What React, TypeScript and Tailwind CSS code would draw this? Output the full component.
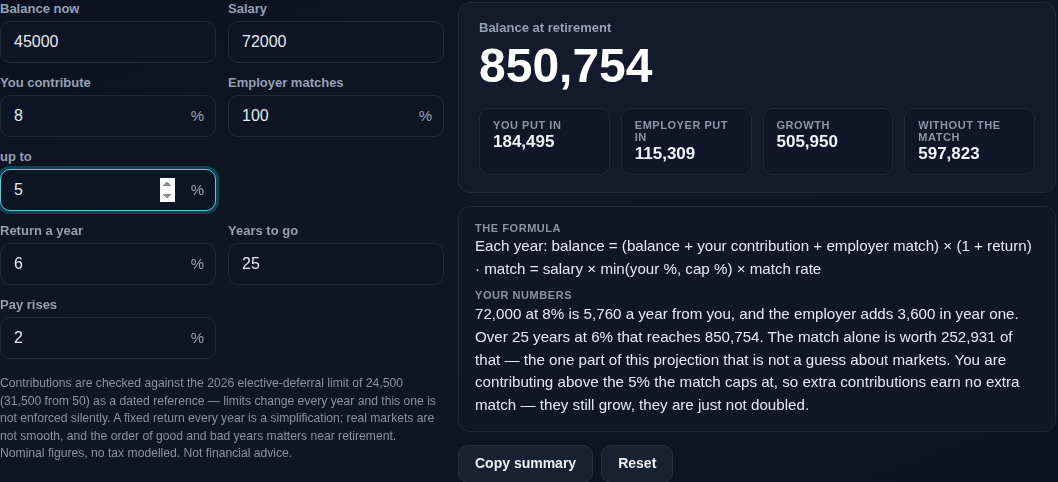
import { ReactNode } from 'react'

function Field({ label, value, suffix, focused }: { label: string; value: string; suffix?: boolean; focused?: boolean }) {
  return (
    <label className="flex flex-col">
      <span className="text-[13px] leading-4 font-bold text-[#94a0b3] mb-1">{label}</span>
      <div
        className={`flex items-center h-[42px] rounded-[10px] bg-[#0d1424] pl-[13px] pr-[11px] ${
          focused ? 'border border-[#5ec8d8] ring-[3px] ring-[#0f4553]' : 'border border-[#222b3a]'
        }`}
      >
        {focused ? (
          <input
            type="number"
            defaultValue={value}
            autoFocus
            className="flex-1 min-w-0 bg-transparent text-[16px] text-[#e5e9f0] outline-none"
          />
        ) : (
          <span className="flex-1 text-[16px] text-[#e5e9f0]">{value}</span>
        )}
        {suffix && <span className="ml-4 text-[15px] text-[#9aa3b2]">%</span>}
      </div>
    </label>
  )
}

function Stat({ label, value }: { label: string; value: string }) {
  return (
    <div className="flex-1 h-[67px] rounded-[10px] border border-[#1f293a] bg-[#0f1627] px-[13px] pt-[10px]">
      <div className="text-[11px] leading-3 font-bold tracking-wider uppercase text-[#8b96a8]">{label}</div>
      <div className="text-[17px] leading-5 font-bold text-[#f1f4f8] mt-[1px]">{value}</div>
    </div>
  )
}

function Caption({ children }: { children: ReactNode }) {
  return <div className="text-[11px] leading-3 font-bold tracking-wider uppercase text-[#8a94a6]">{children}</div>
}

export default function App() {
  return (
    <div
      className="w-full min-h-screen overflow-hidden bg-[linear-gradient(160deg,#0b111e_0%,#0f1727_45%,#0c1220_100%)] text-[#e5e9f0]"
      style={{ fontFamily: '"Liberation Sans", Arial, sans-serif' }}
    >
      <div className="flex gap-[14px] pr-[2px]">
        {/* Inputs */}
        <div className="w-[444px] shrink-0 pt-[1px]">
          <div className="grid grid-cols-2 gap-x-3 gap-y-3">
            <Field label="Balance now" value="45000" />
            <Field label="Salary" value="72000" />
            <Field label="You contribute" value="8" suffix />
            <Field label="Employer matches" value="100" suffix />
            <Field label="up to" value="5" suffix focused />
            <div />
            <Field label="Return a year" value="6" suffix />
            <Field label="Years to go" value="25" />
            <Field label="Pay rises" value="2" suffix />
          </div>
          <p className="mt-4 text-[12.15px] leading-[17.5px] text-[#8892a3]">
            Contributions are checked against the 2026 elective-deferral limit of 24,500 (31,500 from 50) as a dated
            reference — limits change every year and this one is not enforced silently. A fixed return every year is a
            simplification; real markets are not smooth, and the order of good and bad years matters near retirement.
            Nominal figures, no tax modelled. Not financial advice.
          </p>
        </div>

        {/* Results */}
        <div className="flex-1 min-w-0 mt-[2px] flex flex-col gap-[13px]">
          <div className="rounded-[12px] border border-[#222c3e] bg-[#121a2c] px-5 pt-[17px] pb-[17px]">
            <div className="text-[13px] leading-4 font-bold text-[#94a0b3]">Balance at retirement</div>
            <div className="text-[48px] leading-none font-bold text-white mt-[6px]">850,754</div>
            <div className="flex gap-[11px] mt-[18px]">
              <Stat label="You put in" value="184,495" />
              <Stat label="Employer put in" value="115,309" />
              <Stat label="Growth" value="505,950" />
              <Stat label="Without the match" value="597,823" />
            </div>
          </div>

          <div className="rounded-[12px] border border-[#1f293a] bg-[#0f1626] px-4 pt-[15px] pb-[14px]">
            <Caption>The formula</Caption>
            <p className="text-[15.15px] leading-[23px] text-[#e5e9f0]">
              Each year: balance = (balance + your contribution + employer match) × (1 + return) · match = salary ×
              min(your %, cap %) × match rate
            </p>
            <div className="mt-[9px]">
              <Caption>Your numbers</Caption>
            </div>
            <p className="mt-[2px] text-[15.15px] leading-[22.75px] text-[#e5e9f0]">
              72,000 at 8% is 5,760 a year from you, and the employer adds 3,600 in year one. Over 25 years at 6% that
              reaches 850,754. The match alone is worth 252,931 of that — the one part of this projection that is not a
              guess about markets. You are contributing above the 5% the match caps at, so extra contributions earn no
              extra match — they still grow, they are just not doubled.
            </p>
          </div>

          <div className="flex gap-2">
            <button className="h-[38px] rounded-[10px] border border-[#263043] bg-[#182131] px-4 text-[14px] font-bold text-[#eef1f5]">
              Copy summary
            </button>
            <button className="h-[38px] rounded-[10px] border border-[#263043] bg-[#182131] px-4 text-[14px] font-bold text-[#eef1f5]">
              Reset
            </button>
          </div>
        </div>
      </div>
    </div>
  )
}
